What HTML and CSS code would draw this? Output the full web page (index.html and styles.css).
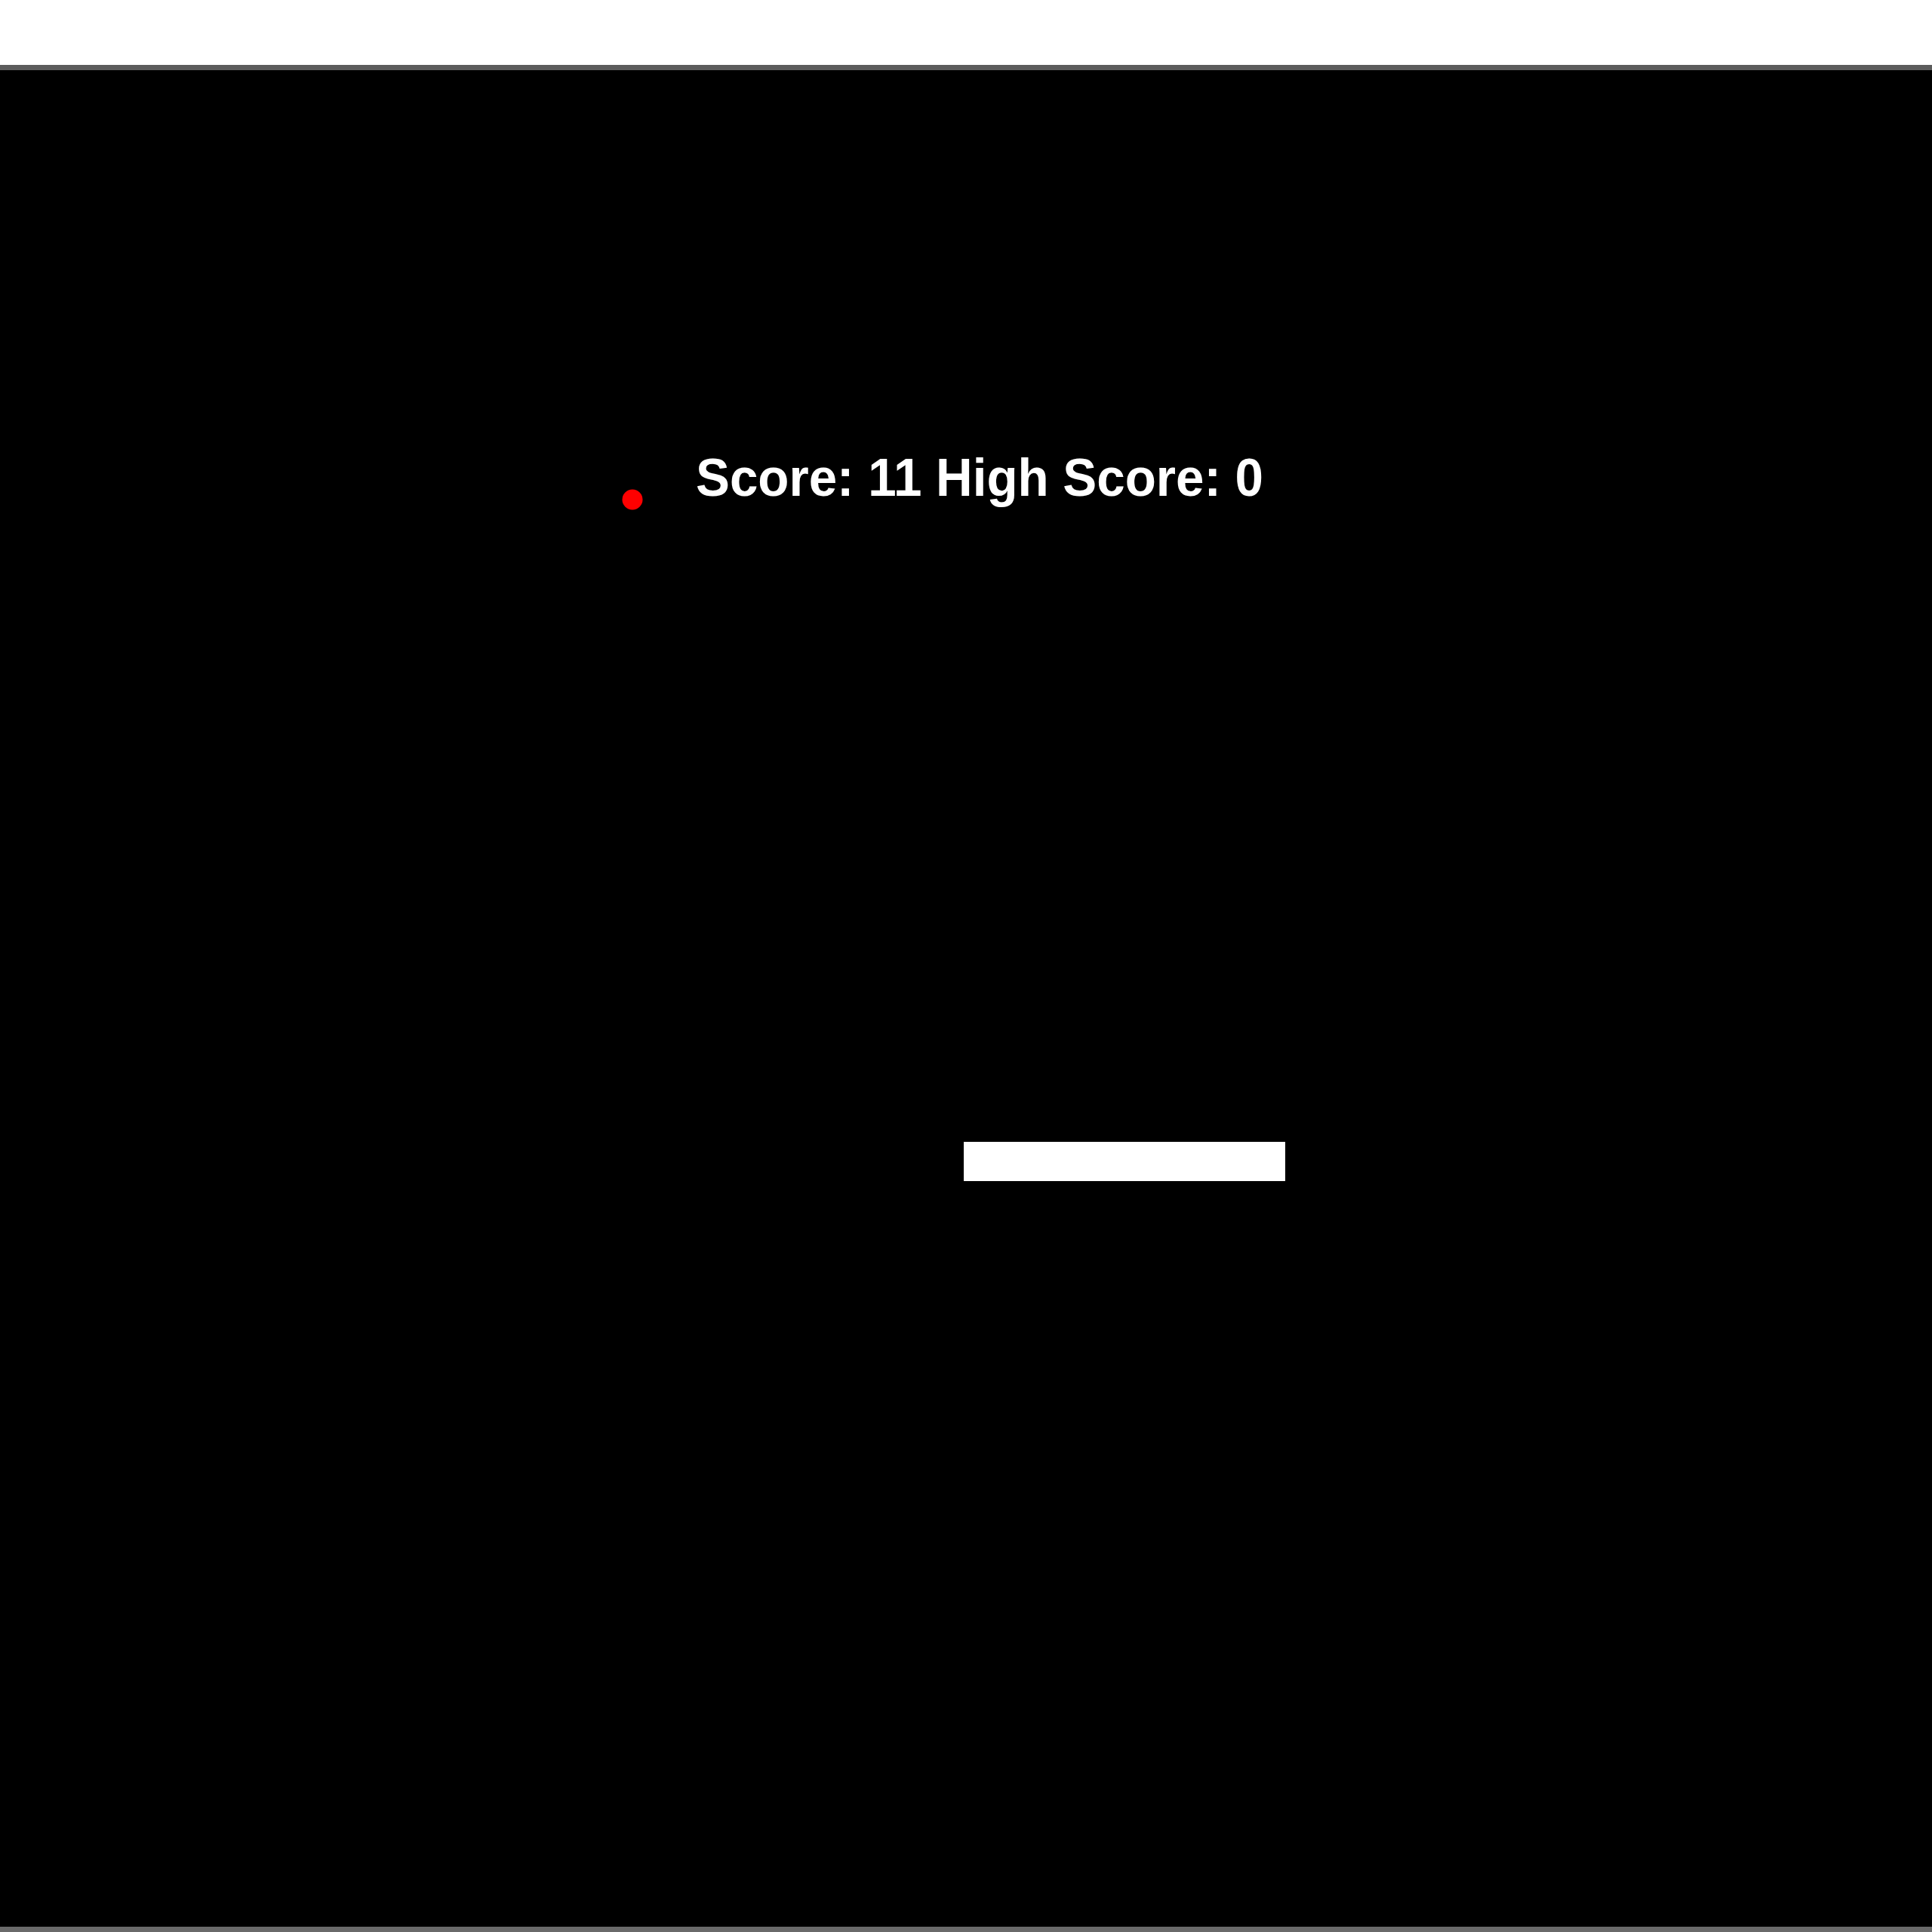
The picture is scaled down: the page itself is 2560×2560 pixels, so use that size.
FILE: index.html
```html
<!DOCTYPE html>
<html>
<head>
<meta charset="utf-8">
<title>Game</title>
<link rel="stylesheet" href="styles.css">
</head>
<body>
<div class="top"></div>
<div class="game">
  <svg class="board" width="2560" height="2460" viewBox="0 0 2560 2460">
    <circle class="ball" cx="838" cy="569" r="13.5"></circle>
    <text class="score" x="922" y="564" textLength="752" lengthAdjust="spacingAndGlyphs">Score: 11 High Score: 0</text>
    <rect class="paddle" x="1277" y="1420" width="426" height="52"></rect>
  </svg>
</div>
</body>
</html>
```
FILE: styles.css
```css
html, body {
  margin: 0;
  padding: 0;
  background: #ffffff;
  overflow: hidden;
}
.top {
  height: 86px;
  background: #ffffff;
}
.game {
  border-top: 7px solid #5c5c5c;
  border-bottom: 7px solid #6a6a6a;
  background: #000000;
  height: 2460px;
}
.board {
  display: block;
}
.ball {
  fill: #ff0000;
}
.paddle {
  fill: #ffffff;
}
.score {
  fill: #ffffff;
  font-family: "Liberation Sans", Arial, sans-serif;
  font-weight: bold;
  font-size: 70px;
}
```
